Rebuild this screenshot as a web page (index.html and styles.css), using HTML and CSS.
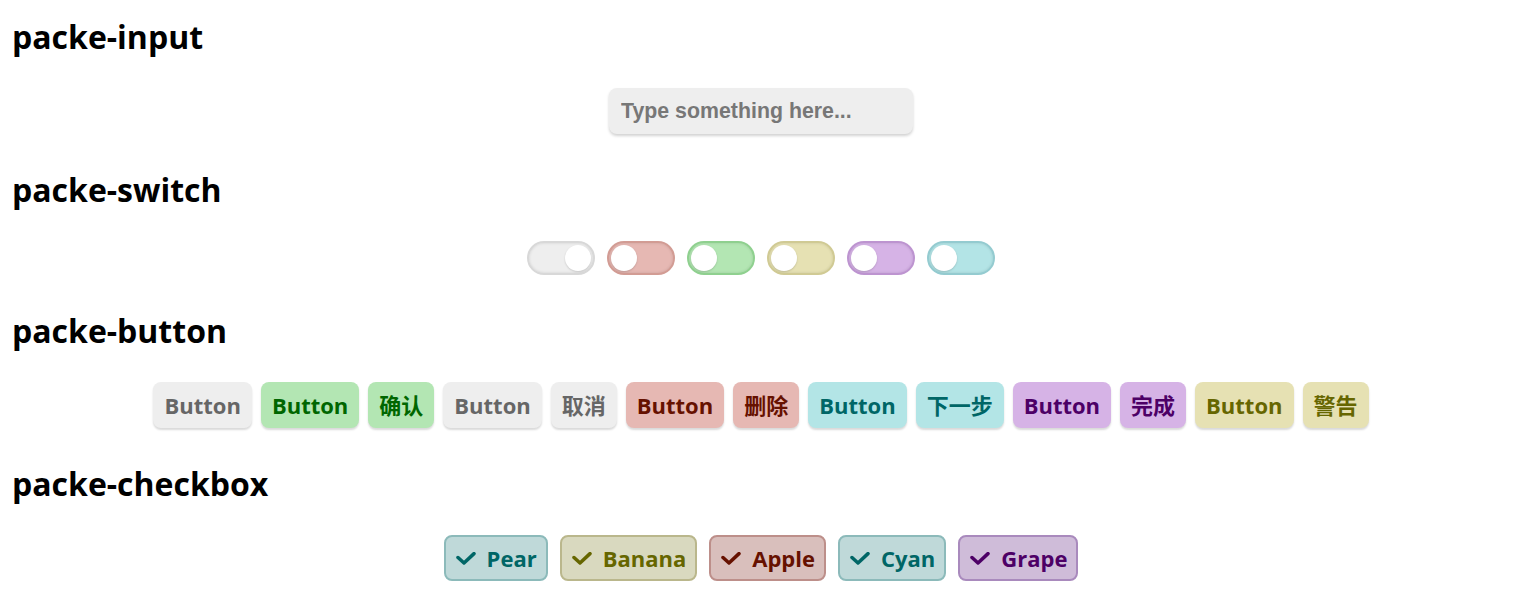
FILE: index.html
```html
<!DOCTYPE html>
<html lang="zh-CN">
<head>
<meta charset="utf-8">
<title>packe components</title>
<link rel="stylesheet" href="styles.css">
</head>
<body>
  <section class="section">
    <h1 class="title">packe-input</h1>
    <div class="demo">
      <input class="packe-input" type="text" placeholder="Type something here...">
    </div>
  </section>

  <section class="section">
    <h1 class="title">packe-switch</h1>
    <div class="demo demo-switch">
      <span class="switch switch-gray is-on"><span class="knob"></span></span>
      <span class="switch switch-red"><span class="knob"></span></span>
      <span class="switch switch-green"><span class="knob"></span></span>
      <span class="switch switch-yellow"><span class="knob"></span></span>
      <span class="switch switch-purple"><span class="knob"></span></span>
      <span class="switch switch-cyan"><span class="knob"></span></span>
    </div>
  </section>

  <section class="section">
    <h1 class="title">packe-button</h1>
    <div class="demo demo-button">
      <button class="btn btn-gray">Button</button>
      <button class="btn btn-green">Button</button>
      <button class="btn btn-green">确认</button>
      <button class="btn btn-gray">Button</button>
      <button class="btn btn-gray">取消</button>
      <button class="btn btn-red">Button</button>
      <button class="btn btn-red">删除</button>
      <button class="btn btn-cyan">Button</button>
      <button class="btn btn-cyan">下一步</button>
      <button class="btn btn-purple">Button</button>
      <button class="btn btn-purple">完成</button>
      <button class="btn btn-yellow">Button</button>
      <button class="btn btn-yellow">警告</button>
    </div>
  </section>

  <section class="section">
    <h1 class="title">packe-checkbox</h1>
    <div class="demo demo-check">
      <label class="check check-cyan"><svg class="tick" viewBox="0 0 20 13" width="20" height="13"><polyline points="2,5.5 8,11 18,1.6" /></svg><span>Pear</span></label>
      <label class="check check-yellow"><svg class="tick" viewBox="0 0 20 13" width="20" height="13"><polyline points="2,5.5 8,11 18,1.6" /></svg><span>Banana</span></label>
      <label class="check check-red"><svg class="tick" viewBox="0 0 20 13" width="20" height="13"><polyline points="2,5.5 8,11 18,1.6" /></svg><span>Apple</span></label>
      <label class="check check-cyan"><svg class="tick" viewBox="0 0 20 13" width="20" height="13"><polyline points="2,5.5 8,11 18,1.6" /></svg><span>Cyan</span></label>
      <label class="check check-purple"><svg class="tick" viewBox="0 0 20 13" width="20" height="13"><polyline points="2,5.5 8,11 18,1.6" /></svg><span>Grape</span></label>
    </div>
  </section>
</body>
</html>
```

FILE: styles.css
```css
html, body {
  background: #ffffff;
}

body {
  margin: 0;
  padding: 14px 8px 0;
  font-family: "Open Sans", "Noto Sans CJK SC", sans-serif;
  color: #000;
}

.title {
  margin: 0;
  padding: 3px 0 0 4px;
  font-size: 32px;
  line-height: 40px;
  font-weight: 700;
  color: #000;
}

.demo {
  display: flex;
  justify-content: center;
  align-items: flex-start;
  padding: 31px 0 33px;
}

/* input */
.packe-input {
  box-sizing: border-box;
  width: 304px;
  height: 46px;
  padding: 0 12px;
  border: none;
  border-radius: 8px;
  background: #eeeeee;
  box-shadow: 0 2px 3px rgba(0, 0, 0, 0.18);
  font-family: "Liberation Sans", Arial, sans-serif;
  font-size: 21.33px;
  font-weight: 700;
  color: #555;
  outline: none;
}

.packe-input::placeholder {
  color: #777777;
  opacity: 1;
}

/* switch */
.demo-switch {
  gap: 12px;
}

.switch {
  box-sizing: border-box;
  width: 68px;
  height: 34px;
  border-radius: 17px;
  border: 2px solid;
  padding: 2px;
  display: flex;
  justify-content: flex-start;
  align-items: center;
  box-shadow: inset 0 0 3px rgba(0, 0, 0, 0.12);
}

.switch.is-on {
  justify-content: flex-end;
}

.knob {
  width: 26px;
  height: 26px;
  border-radius: 50%;
  background: #ffffff;
  box-shadow: 0 1px 2px rgba(0, 0, 0, 0.15);
}

.switch-gray   { background: #eeeeee; border-color: #d8d8d8; }
.switch-red    { background: #e6b8b3; border-color: #d29c94; }
.switch-green  { background: #b3e6b3; border-color: #8fd08f; }
.switch-yellow { background: #e6e1b3; border-color: #d0ca94; }
.switch-purple { background: #d6b3e6; border-color: #bd94d0; }
.switch-cyan   { background: #b3e4e6; border-color: #94cbd0; }

/* buttons */
.demo-button {
  gap: 9px;
}

.btn {
  box-sizing: border-box;
  height: 46px;
  padding: 0 11px;
  border: none;
  border-radius: 8px;
  font-family: "Open Sans", "Noto Sans CJK SC", sans-serif;
  font-size: 22px;
  font-weight: 700;
  line-height: 46px;
  box-shadow: 0 2px 2px rgba(0, 0, 0, 0.15);
  cursor: pointer;
}

.btn-gray   { background: #eeeeee; color: #666666; }
.btn-green  { background: #b3e6b3; color: #006600; }
.btn-red    { background: #e6b8b3; color: #661100; }
.btn-cyan   { background: #b3e5e6; color: #006666; }
.btn-purple { background: #d6b3e6; color: #4d0066; }
.btn-yellow { background: #e6e1b3; color: #666600; }

/* checkbox */
.demo-check {
  gap: 12px;
}

.check {
  box-sizing: border-box;
  height: 46px;
  padding: 0 9px 0 10px;
  border: 2px solid;
  border-radius: 8px;
  display: flex;
  align-items: center;
  gap: 11px;
  font-size: 22px;
  font-weight: 700;
}

.tick {
  display: block;
  fill: none;
  stroke: currentColor;
  stroke-width: 3.5;
  stroke-linecap: round;
  stroke-linejoin: round;
}

.check-cyan   { background: #bfd9d9; border-color: #8cbaba; color: #006666; }
.check-yellow { background: #d9d9bf; border-color: #bab78c; color: #666600; }
.check-red    { background: #d9bfbc; border-color: #bd8f8a; color: #661100; }
.check-purple { background: #cfbcd9; border-color: #a98abd; color: #4d0066; }
```
